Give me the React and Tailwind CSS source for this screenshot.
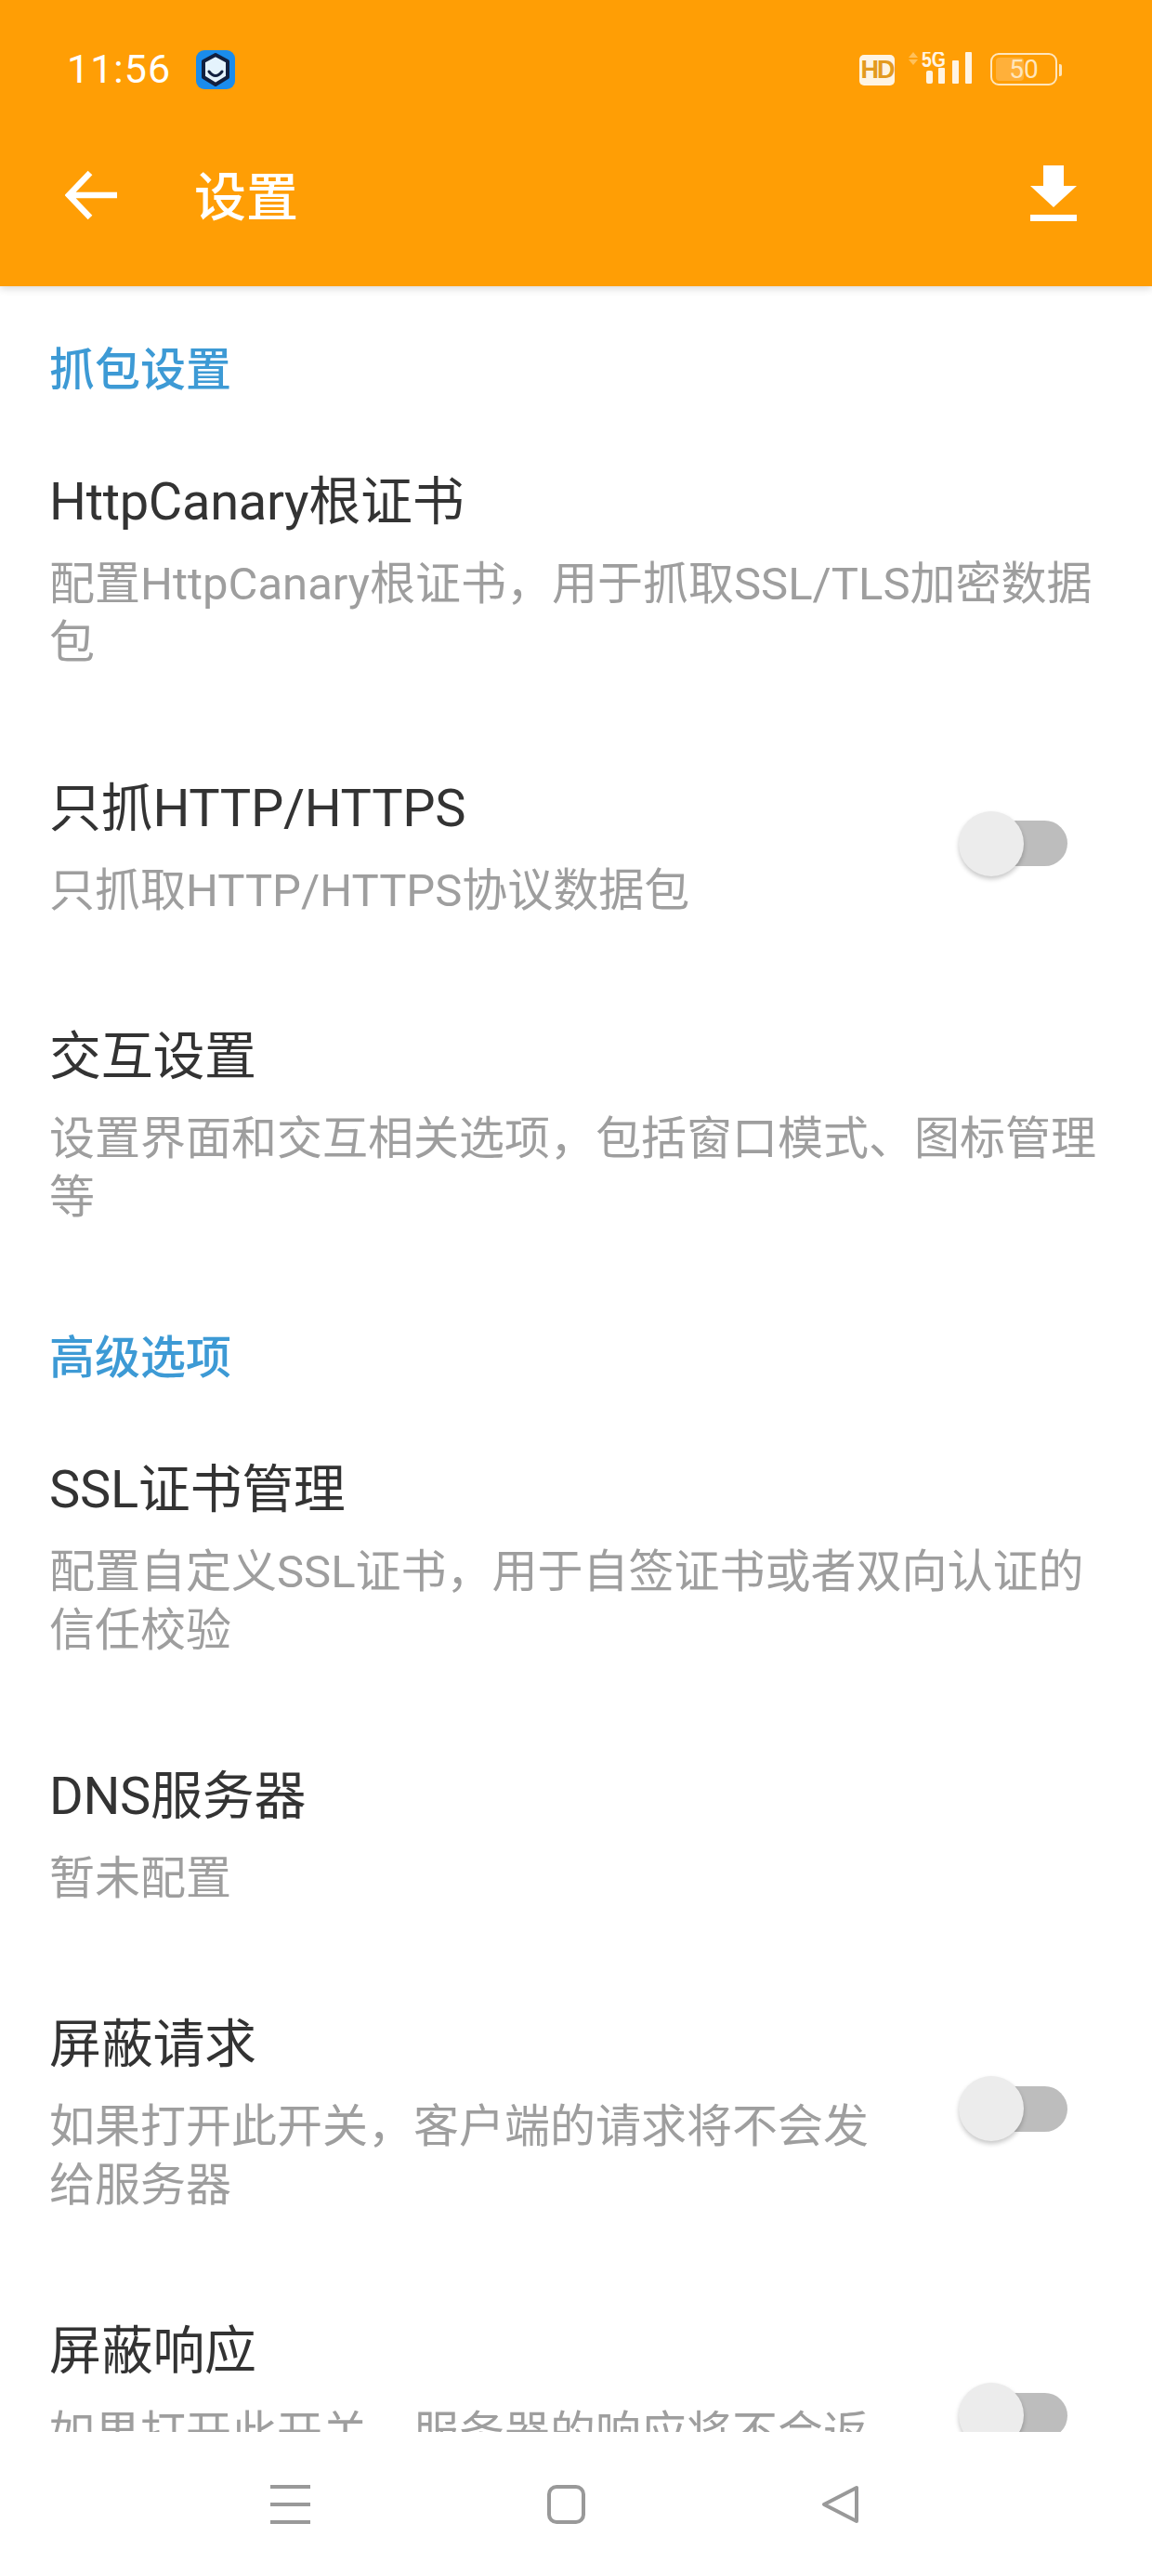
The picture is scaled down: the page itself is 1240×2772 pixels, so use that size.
import React from "react";

function Toggle() {
  return (
    <div className="relative w-[117px] h-[70px] flex items-center justify-end shrink-0 mr-[91px] mt-[-8px]">
      <div className="w-[80px] h-[49px] rounded-full bg-[#bdbdbd]" />
      <div className="absolute left-0 top-0 w-[70px] h-[70px] rounded-full bg-[#ececec] shadow-[0_3px_5px_rgba(0,0,0,0.22)]" />
    </div>
  );
}

function Row({ title, sub, toggle }) {
  return (
    <div className="flex items-center pl-[53px] pt-[66px] pb-[44px]">
      <div className={toggle ? "w-[925px] mr-[54px] shrink-0" : "flex-1 pr-[52px]"}>
        <div className="text-[56px] leading-[74px] tracking-[-0.3px] text-[#333333]">{title}</div>
        <div className="mt-[20px] text-[49px] leading-[63px] text-[#9e9e9e]">{sub}</div>
      </div>
      {toggle && <Toggle />}
    </div>
  );
}

function Section({ children, className }) {
  return <div className={"pl-[53px] text-[49px] leading-[62px] font-medium text-[#3d9ad5] " + className}>{children}</div>;
}

export default function App() {
  return (
    <div className="w-full h-[2772px] flex flex-col overflow-hidden bg-white font-['Roboto','Noto_Sans_CJK_SC',sans-serif]">
      <header className="h-[308px] shrink-0 bg-[#ff9e05] relative z-10 shadow-[0_3px_8px_rgba(0,0,0,0.14)] text-white">
        <div className="h-[116px] flex items-center pl-[72px] pr-[102px] pt-[33px]">
          <span className="text-[43px] leading-none tracking-[1px] w-[139px]">11:56</span>
          <svg width="42" height="42" viewBox="0 0 42 42" className="shrink-0">
            <rect width="42" height="42" rx="9" fill="#1a8cec" />
            <path d="M21 5 L34 12 V29 L21 37 L8 29 V12 Z" fill="#e4f3fc" stroke="#12203f" strokeWidth="4" strokeLinejoin="round" />
            <path d="M14 23 Q21 32 28 23" fill="none" stroke="#12203f" strokeWidth="3" strokeLinecap="round" />
          </svg>
          <div className="flex-1" />
          <div className="w-[38px] h-[33px] mt-[2px] rounded-[5px] bg-[#fff4e3] text-[#e39a20] text-[27px] leading-[33px] font-bold font-['Liberation_Sans'] text-center tracking-[-2px] mr-[14px]">HD</div>
          <svg width="70" height="38" viewBox="0 0 70 38" className="shrink-0 mr-[19px]">
            <path d="M6 0 L1 6 H11 Z M6 14 L1 8 H11 Z" fill="#ffc15c" />
            <rect x="20" y="20" width="7" height="14" rx="2" fill="#fff4e3" />
            <rect x="33" y="17" width="7" height="17" rx="1" fill="#fff4e3" />
            <rect x="48" y="9" width="7" height="25" rx="1" fill="#fff4e3" />
            <rect x="62" y="0" width="7" height="34" rx="1" fill="#fff4e3" />
            <text x="15" y="16" fontSize="23" fontWeight="700" fontFamily="Liberation Sans" fill="#fff4e3" textLength="26" lengthAdjust="spacingAndGlyphs">5G</text>
          </svg>
          <div className="relative w-[72px] h-[35px] rounded-[9px] border-2 border-[#ffe6bd] flex items-center justify-center text-[28px] leading-none text-[#ffe6bd] shrink-0">
            <div className="absolute left-[4px] top-[3px] bottom-[3px] w-[30px] rounded-[4px] bg-[#ffb03a]" />
            <span className="relative">50</span>
            <div className="absolute right-[-7px] top-[10px] w-[3px] h-[13px] rounded-r-[2px] bg-[#ffe6bd]" />
          </div>
        </div>
        <div className="flex items-center pl-[70px] pr-[81px] h-[192px]">
          <svg width="56" height="54" viewBox="0 0 56 54" className="shrink-0 mb-[4px]">
            <path d="M56 27 H5 M27 3 L4 27 L27 51" fill="none" stroke="#fff" strokeWidth="6.5" />
          </svg>
          <span className="ml-[83px] mt-[2px] text-[56px] leading-[74px] font-medium">设置</span>
          <div className="flex-1" />
          <svg width="50" height="60" viewBox="0 0 50 60" className="shrink-0 mb-[8px]">
            <path d="M14 0 H36 V22 H50 L25 45 L0 22 H14 Z" fill="#fff" />
            <rect x="0" y="53" width="50" height="7" fill="#fff" />
          </svg>
        </div>
      </header>

      <main className="flex-1 min-h-0 overflow-hidden">
        <Section className="pt-[60px] pb-[7px]">抓包设置</Section>
        <Row title="HttpCanary根证书" sub="配置HttpCanary根证书，用于抓取SSL/TLS加密数据包" />
        <Row title="只抓HTTP/HTTPS" sub="只抓取HTTP/HTTPS协议数据包" toggle />
        <Row title="交互设置" sub="设置界面和交互相关选项，包括窗口模式、图标管理等" />
        <Section className="pt-[67px] pb-[7px]">高级选项</Section>
        <Row title="SSL证书管理" sub="配置自定义SSL证书，用于自签证书或者双向认证的信任校验" />
        <Row title="DNS服务器" sub="暂未配置" />
        <Row title="屏蔽请求" sub="如果打开此开关，客户端的请求将不会发给服务器" toggle />
        <Row title="屏蔽响应" sub="如果打开此开关，服务器的响应将不会返回给客户端" toggle />
      </main>

      <nav className="h-[155px] shrink-0 bg-white flex items-start pl-[291px] pt-[57px]">
        <svg width="43" height="42" viewBox="0 0 43 42" className="shrink-0 mr-[255px]">
          <path d="M0 2 H43 M0 21 H43 M0 40 H43" stroke="#999" strokeWidth="4" />
        </svg>
        <svg width="41" height="42" viewBox="0 0 41 42" className="shrink-0 mr-[254px]">
          <rect x="2" y="2" width="37" height="38" rx="8" fill="none" stroke="#999" strokeWidth="4" />
        </svg>
        <svg width="41" height="42" viewBox="0 0 41 42" className="shrink-0">
          <path d="M38 3 V39 L3 21 Z" fill="none" stroke="#999" strokeWidth="4" strokeLinejoin="round" />
        </svg>
      </nav>
    </div>
  );
}
